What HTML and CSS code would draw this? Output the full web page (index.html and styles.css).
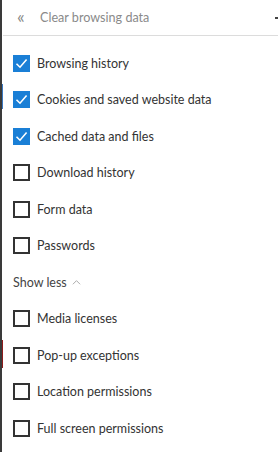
FILE: index.html
```html
<!DOCTYPE html>
<html lang="en">
<head>
    <meta charset="UTF-8">
    <title>Clear browsing data</title>
    <link rel="stylesheet" href="styles.css">
</head>
<body>
    <div class="panel">
        <div class="edge-mark blue"></div>
        <div class="edge-mark red"></div>

        <div class="panel-header">
            <span class="back">&laquo;</span>
            <span class="title">Clear browsing data</span>
            <span class="pin"></span>
        </div>

        <ul class="options">
            <li class="option checked"><span class="box"><svg viewBox="0 0 17 17"><path d="M3.5 8.8 L7 12.2 L13.6 4.6" /></svg></span>Browsing history</li>
            <li class="option checked"><span class="box"><svg viewBox="0 0 17 17"><path d="M3.5 8.8 L7 12.2 L13.6 4.6" /></svg></span>Cookies and saved website data</li>
            <li class="option checked"><span class="box"><svg viewBox="0 0 17 17"><path d="M3.5 8.8 L7 12.2 L13.6 4.6" /></svg></span>Cached data and files</li>
            <li class="option"><span class="box"></span>Download history</li>
            <li class="option"><span class="box"></span>Form data</li>
            <li class="option"><span class="box"></span>Passwords</li>
            <li class="option toggle">Show less <svg class="chevron" viewBox="0 0 10 6"><path d="M1 5.5 L5 1.5 L9 5.5" /></svg></li>
            <li class="option"><span class="box"></span>Media licenses</li>
            <li class="option"><span class="box"></span>Pop-up exceptions</li>
            <li class="option"><span class="box"></span>Location permissions</li>
            <li class="option"><span class="box"></span>Full screen permissions</li>
        </ul>
    </div>
</body>
</html>
```

FILE: styles.css
```css
:root {
    --accent: #1a7fd6;
    --text: #333;
    --muted: #8a8a8a;
}

body {
    margin: 0;
    background: #fff;
    font-family: 'Lato', 'Noto Sans', sans-serif;
    color: var(--text);
}

.panel {
    position: relative;
    height: 452px;
    border-left: 2px solid #3a3a3a;
    overflow: hidden;
}

.edge-mark {
    position: absolute;
    left: -2px;
    width: 3px;
}

.edge-mark.blue {
    top: 84px;
    height: 25px;
    background: #3a78c0;
}

.edge-mark.red {
    top: 340px;
    height: 28px;
    background: #8e1c1c;
}

.panel-header {
    height: 35px;
    display: flex;
    align-items: center;
    border-bottom: 1px solid #dcdcdc;
    margin-left: 1px;
}

.back {
    width: 37px;
    padding-left: 14px;
    box-sizing: border-box;
    font-size: 18px;
    color: #888;
    line-height: 1;
    margin-top: -3px;
}

.title {
    flex: 1;
    font-size: 12.6px;
    color: var(--muted);
}

.pin {
    width: 3px;
    height: 2px;
    background: #444;
    margin-top: 1px;
}

.options {
    list-style: none;
    margin: 0;
    padding: 9px 0 0;
}

.option {
    height: 36.5px;
    display: flex;
    align-items: center;
    padding-left: 11px;
    font-size: 12.5px;
}

.box {
    width: 17px;
    height: 17px;
    box-sizing: border-box;
    border: 2px solid #333;
    margin-right: 7px;
    flex-shrink: 0;
}

.option.checked .box {
    background: var(--accent);
    border-color: var(--accent);
    position: relative;
}

.box svg {
    position: absolute;
    left: -2px;
    top: -2px;
    width: 17px;
    height: 17px;
}

.box path {
    fill: none;
    stroke: #fff;
    stroke-width: 1.6;
}

.toggle {
    color: #444;
}

.chevron {
    width: 9px;
    height: 6px;
    margin-left: 5px;
    margin-top: -1px;
}

.chevron path {
    fill: none;
    stroke: #aaa;
    stroke-width: 1.1;
}
```
